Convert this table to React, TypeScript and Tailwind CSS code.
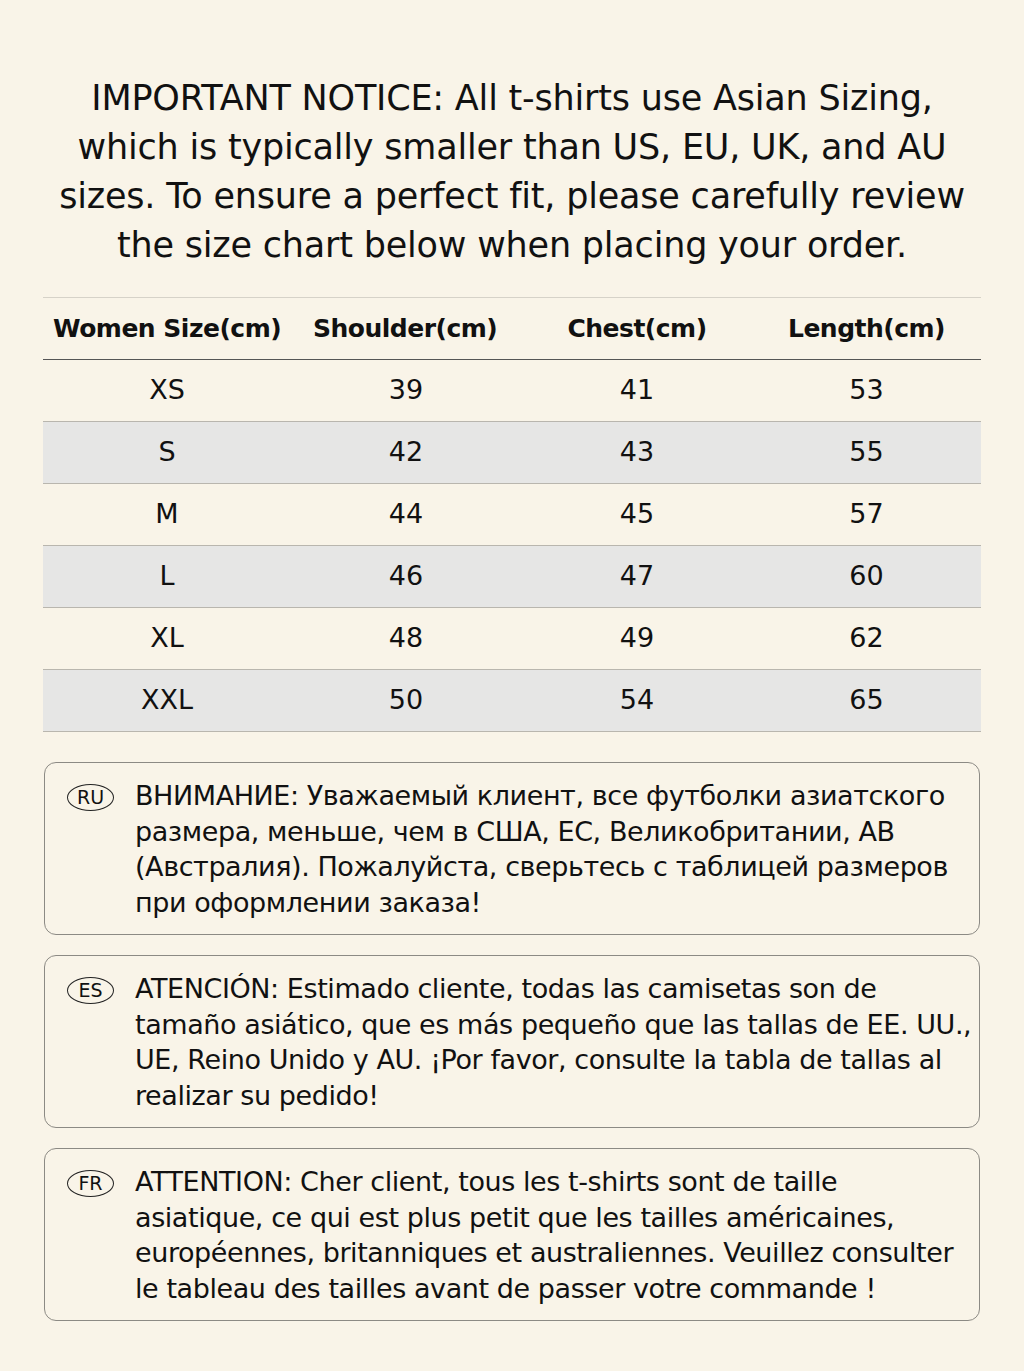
import React from 'react';

const rows = [
  { size: 'XS', shoulder: 39, chest: 41, length: 53 },
  { size: 'S', shoulder: 42, chest: 43, length: 55 },
  { size: 'M', shoulder: 44, chest: 45, length: 57 },
  { size: 'L', shoulder: 46, chest: 47, length: 60 },
  { size: 'XL', shoulder: 48, chest: 49, length: 62 },
  { size: 'XXL', shoulder: 50, chest: 54, length: 65 },
];

const notices = [
  {
    code: 'RU',
    lines: [
      'ВНИМАНИЕ: Уважаемый клиент, все футболки азиатского',
      'размера, меньше, чем в США, ЕС, Великобритании, АВ',
      '(Австралия). Пожалуйста, сверьтесь с таблицей размеров',
      'при оформлении заказа!',
    ],
  },
  {
    code: 'ES',
    lines: [
      'ATENCIÓN: Estimado cliente, todas las camisetas son de',
      'tamaño asiático, que es más pequeño que las tallas de EE. UU.,',
      'UE, Reino Unido y AU. ¡Por favor, consulte la tabla de tallas al',
      'realizar su pedido!',
    ],
  },
  {
    code: 'FR',
    lines: [
      'ATTENTION: Cher client, tous les t-shirts sont de taille',
      'asiatique, ce qui est plus petit que les tailles américaines,',
      'européennes, britanniques et australiennes. Veuillez consulter',
      'le tableau des tailles avant de passer votre commande !',
    ],
  },
];

const heading = [
  'IMPORTANT NOTICE: All t-shirts use Asian Sizing,',
  'which is typically smaller than US, EU, UK, and AU',
  'sizes. To ensure a perfect fit, please carefully review',
  'the size chart below when placing your order.',
];

const cols = 'grid grid-cols-[248px_230px_232px_227px]';

export default function App() {
  return (
    <div className="min-h-[1371px] w-[1024px] bg-[#f9f4e8] text-[#111] font-['DejaVu_Sans',sans-serif]">
      {/* Heading */}
      <div className="pt-[74px] flex flex-col items-center">
        {heading.map((line) => (
          <div key={line} className="whitespace-nowrap text-[35px] leading-[49px] tracking-[-0.2px]">
            {line}
          </div>
        ))}
      </div>

      {/* Size table */}
      <div className="mx-[43px] mt-[27px] border-t border-[#d6d2c8]">
        <div className={`${cols} h-[62px] items-center border-b border-[#555] text-[25px] font-bold tracking-[-0.5px]`}>
          <div className="pl-[10px] whitespace-nowrap">Women Size(cm)</div>
          <div className="pl-[22px] whitespace-nowrap">Shoulder(cm)</div>
          <div className="text-center whitespace-nowrap">Chest(cm)</div>
          <div className="text-center whitespace-nowrap">Length(cm)</div>
        </div>
        {rows.map((r, i) => (
          <div
            key={r.size}
            className={`${cols} h-[62px] items-center border-b border-[#b9b6ae] text-[27px] ${i % 2 === 1 ? 'bg-[#e6e6e5]' : ''}`}
          >
            <div className="text-center">{r.size}</div>
            <div className="text-center">{r.shoulder}</div>
            <div className="text-center">{r.chest}</div>
            <div className="text-center">{r.length}</div>
          </div>
        ))}
      </div>

      {/* Language notices */}
      <div className="mx-[44px] mt-[30px] flex flex-col gap-[20px]">
        {notices.map((n) => (
          <div key={n.code} className="h-[173px] rounded-[12px] border border-[#8c8a84] pl-[22px] pt-[15px] flex items-start">
            <div className="mt-[6px] w-[47px] h-[27px] rounded-[50%] border border-[#222] flex items-center justify-center text-[19px] leading-none shrink-0">
              {n.code}
            </div>
            <div className="ml-[21px] text-[27px] leading-[35.5px] tracking-[-0.42px]">
              {n.lines.map((l) => (
                <div key={l} className="whitespace-nowrap">{l}</div>
              ))}
            </div>
          </div>
        ))}
      </div>
    </div>
  );
}
